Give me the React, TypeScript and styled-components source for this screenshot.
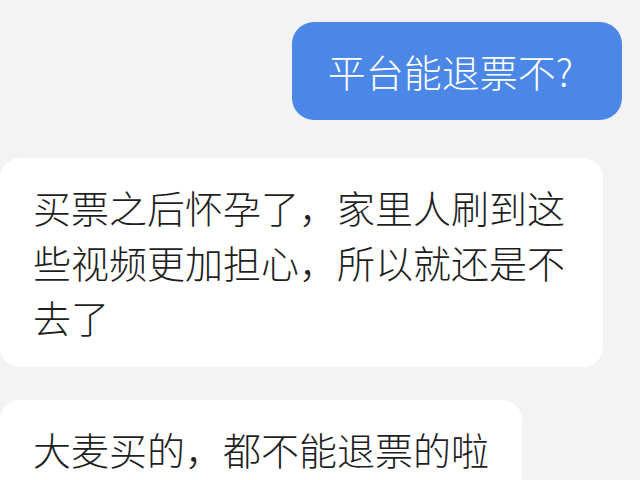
import React from "react";
import styled, { createGlobalStyle } from "styled-components";

const Global = createGlobalStyle`
  html, body {
    margin: 0;
    padding: 0;
    background: #f3f3f3;
    overflow: hidden;
  }
  body {
    font-family: "Noto Sans CJK SC", "Noto Sans", sans-serif;
  }
`;

const Chat = styled.div`
  width: 640px;
  height: 480px;
  box-sizing: border-box;
  padding-top: 22px;
  display: flex;
  flex-direction: column;
  background: #f3f3f3;
  overflow: hidden;
`;

const Row = styled.div<{ $mine?: boolean; $gap: number }>`
  display: flex;
  justify-content: ${(p) => (p.$mine ? "flex-end" : "flex-start")};
  padding-right: ${(p) => (p.$mine ? "18px" : "0")};
  margin-bottom: ${(p) => p.$gap}px;
`;

const Bubble = styled.div<{ $mine?: boolean }>`
  box-sizing: border-box;
  max-width: 603px;
  font-size: 38px;
  font-weight: 300;
  line-height: 55px;
  border-radius: ${(p) => (p.$mine ? "22px" : "20px")};
  background: ${(p) => (p.$mine ? "#4b87e7" : "#ffffff")};
  color: ${(p) => (p.$mine ? "#ffffff" : "#1e1e1e")};
  padding: ${(p) => (p.$mine ? "21px 49px 22px 36px" : "21px 33px 23px 33px")};
`;

export default function App() {
  return (
    <>
      <Global />
      <Chat>
        <Row $mine $gap={38}>
          <Bubble $mine>平台能退票不?</Bubble>
        </Row>
        <Row $gap={33}>
          <Bubble>买票之后怀孕了，家里人刷到这些视频更加担心，所以就还是不去了</Bubble>
        </Row>
        <Row $gap={0}>
          <Bubble>大麦买的，都不能退票的啦</Bubble>
        </Row>
      </Chat>
    </>
  );
}
